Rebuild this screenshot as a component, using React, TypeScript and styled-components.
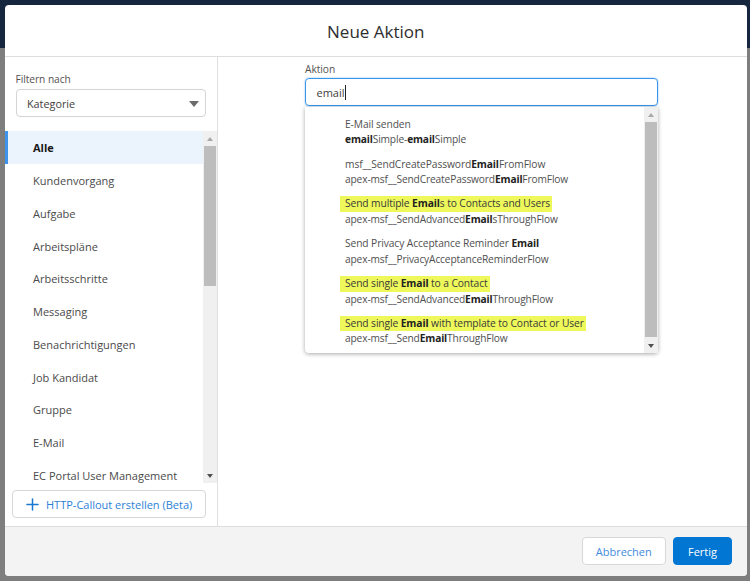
import React from 'react'
import styled, { createGlobalStyle } from 'styled-components'
import { Plus } from 'lucide-react'

const bodyFont = '"Open Sans", "Noto Sans", sans-serif'

const Global = createGlobalStyle`
  html, body { margin: 0; padding: 0; }
  body { font-family: ${bodyFont}; color: #3e3e3c; }
`

const Backdrop = styled.div`
  box-sizing: border-box;
  width: 750px;
  height: 581px;
  padding: 5px 3.5px 5px 5px;
  overflow: hidden;
  background: linear-gradient(#17263f 0, #17263f 48px, #7e7e7e 48px);
`

const Modal = styled.div`
  display: flex;
  flex-direction: column;
  height: 100%;
  background: #fff;
  border-radius: 4px;
  overflow: hidden;
`

const Header = styled.header`
  flex: 0 0 49px;
  padding-top: 2px;
  display: flex;
  align-items: center;
  justify-content: center;
  border-bottom: 1px solid #dedede;
  font-size: 17px;
  color: #2e2e2e;
`

const Body = styled.div`
  flex: 1;
  display: flex;
  min-height: 0;
`

const Sidebar = styled.aside`
  flex: 0 0 211.5px;
  display: flex;
  flex-direction: column;
  border-right: 1.5px solid #dfdfdf;
`

const FilterBox = styled.div`
  padding: 15px 11px 14px 10.5px;
`

const Label = styled.div`
  font-size: 10.2px;
  line-height: 14px;
  letter-spacing: -0.05px;
  color: #54514f;
`

const Select = styled.div`
  box-sizing: border-box;
  height: 28px;
  margin-top: 3px;
  padding: 0 6px 0 10.5px;
  display: flex;
  align-items: center;
  justify-content: space-between;
  border: 1px solid #d4d4d4;
  border-radius: 4px;
  font-size: 10.8px;
`

const Caret = styled.span`
  width: 0;
  height: 0;
  margin-top: 2px;
  border-left: 5px solid transparent;
  border-right: 5px solid transparent;
  border-top: 6px solid #6b6b6b;
`

const ListWrap = styled.div`
  flex: 1;
  min-height: 0;
  display: flex;
  overflow: hidden;
`

const List = styled.ul`
  flex: 1;
  margin: 0;
  padding: 0;
  list-style: none;
  overflow: hidden;
`

const ListItem = styled.li<{ $active?: boolean }>`
  box-sizing: border-box;
  height: 32.75px;
  padding-left: ${p => (p.$active ? '25px' : '28px')};
  padding-top: 1px;
  display: flex;
  align-items: center;
  font-size: 11px;
  font-weight: ${p => (p.$active ? 700 : 400)};
  color: ${p => (p.$active ? '#181818' : '#4a4a4a')};
  background: ${p => (p.$active ? '#ebf3fd' : 'transparent')};
  border-left: ${p => (p.$active ? '3px solid #3d94ea' : 'none')};
`

const Track = styled.div`
  flex: 0 0 14px;
  display: flex;
  flex-direction: column;
  background: #f0f0f0;
`

const ArrowBox = styled.div`
  flex: 0 0 15px;
  display: flex;
  align-items: center;
  justify-content: center;
  background: #f0f0f0;
`

const ArrowUp = styled.span`
  width: 0;
  height: 0;
  border-left: 3.5px solid transparent;
  border-right: 3.5px solid transparent;
  border-bottom: 4px solid #a8a8a8;
`

const ArrowDown = styled.span`
  width: 0;
  height: 0;
  border-left: 3.5px solid transparent;
  border-right: 3.5px solid transparent;
  border-top: 4px solid #505050;
`

const Thumb = styled.div<{ $height: number }>`
  flex: 0 0 ${p => p.$height}px;
  margin: 0 1px;
  background: #bdbdbd;
`

const TrackFill = styled.div`
  flex: 1;
`

const CalloutBar = styled.div`
  padding: 7px 11px 8px 7px;
`

const CalloutButton = styled.button`
  box-sizing: border-box;
  width: 194px;
  height: 28px;
  padding: 0 0 0 10px;
  display: flex;
  align-items: center;
  gap: 4px;
  background: #fff;
  border: 1px solid #d8d8d8;
  border-radius: 4px;
  font-family: inherit;
  font-size: 11px;
  color: #2c7fd6;
`

const Main = styled.main`
  flex: 1;
  padding: 5px 0 0 87px;
`

const Field = styled.div`
  position: relative;
  width: 353px;
`

const SearchInput = styled.div`
  box-sizing: border-box;
  height: 28px;
  margin-top: 2px;
  padding-left: 10.5px;
  display: flex;
  align-items: center;
  border: 1px solid #3a95ea;
  box-shadow: 0 0 2px #7cb9f2;
  border-radius: 4px;
  font-size: 11px;
  color: #3e3e3c;
`

const Cursor = styled.span`
  width: 1px;
  height: 15px;
  background: #222;
`

const Dropdown = styled.div`
  position: absolute;
  top: 45px;
  left: 0;
  right: 0;
  height: 246px;
  display: flex;
  background: #fff;
  border-radius: 0 0 4px 4px;
  box-shadow: 0 1px 4px rgba(0, 0, 0, 0.35);
`

const Options = styled.div`
  flex: 1;
  padding: 9.8px 0 0 40px;
`

const Option = styled.div`
  height: 39.8px;
  font-size: 10.2px;
  line-height: 15.6px;
  letter-spacing: -0.14px;
  color: #4f4f4f;

  b {
    color: #222;
    font-weight: 700;
  }
`

const OptionTitle = styled.div`
  font-size: 10.25px;
  letter-spacing: -0.1px;
  white-space: nowrap;
`

const Mark = styled.span`
  display: inline-block;
  margin-left: -5px;
  padding: 0 2px 0 5px;
  background: #eef85a;
  color: #3a3a3a;
`

const Footer = styled.footer`
  flex: 0 0 48px;
  display: flex;
  align-items: center;
  justify-content: flex-end;
  gap: 7px;
  padding: 0 14.5px 1px 0;
  background: #f3f3f3;
  border-top: 1px solid #dedede;
`

const Button = styled.button<{ $primary?: boolean }>`
  box-sizing: border-box;
  height: 28px;
  width: ${p => (p.$primary ? '59px' : '84.5px')};
  padding: 0;
  border-radius: 4px;
  border: 1px solid ${p => (p.$primary ? '#0176d3' : '#d8d8d8')};
  background: ${p => (p.$primary ? '#0176d3' : '#fff')};
  color: ${p => (p.$primary ? '#fff' : '#3f8bdb')};
  font-family: inherit;
  font-size: 11px;
`

const categories = [
  'Alle',
  'Kundenvorgang',
  'Aufgabe',
  'Arbeitspläne',
  'Arbeitsschritte',
  'Messaging',
  'Benachrichtigungen',
  'Job Kandidat',
  'Gruppe',
  'E-Mail',
  'EC Portal User Management',
]

const Scrollbar = ({ thumb }: { thumb: number }) => (
  <Track>
    <ArrowBox><ArrowUp /></ArrowBox>
    <Thumb $height={thumb} />
    <TrackFill />
    <ArrowBox><ArrowDown /></ArrowBox>
  </Track>
)

export default function App() {
  return (
    <>
      <Global />
      <Backdrop>
        <Modal>
          <Header>Neue Aktion</Header>
          <Body>
            <Sidebar>
              <FilterBox>
                <Label>Filtern nach</Label>
                <Select>Kategorie<Caret /></Select>
              </FilterBox>
              <ListWrap>
                <List>
                  {categories.map((c, i) => (
                    <ListItem key={c} $active={i === 0}>{c}</ListItem>
                  ))}
                </List>
                <Scrollbar thumb={140} />
              </ListWrap>
              <CalloutBar>
                <CalloutButton><Plus size={19} color="#1b78d0" strokeWidth={1.9} />HTTP-Callout erstellen (Beta)</CalloutButton>
              </CalloutBar>
            </Sidebar>
            <Main>
              <Field>
                <Label>Aktion</Label>
                <SearchInput>email<Cursor /></SearchInput>
                <Dropdown>
                  <Options>
                    <Option>
                      <OptionTitle>E-Mail senden</OptionTitle>
                      <div><b>email</b>Simple-<b>email</b>Simple</div>
                    </Option>
                    <Option>
                      <OptionTitle>msf__SendCreatePassword<b>Email</b>FromFlow</OptionTitle>
                      <div>apex-msf__SendCreatePassword<b>Email</b>FromFlow</div>
                    </Option>
                    <Option>
                      <OptionTitle><Mark>Send multiple <b>Email</b>s to Contacts and Users</Mark></OptionTitle>
                      <div>apex-msf__SendAdvanced<b>Email</b>sThroughFlow</div>
                    </Option>
                    <Option>
                      <OptionTitle>Send Privacy Acceptance Reminder <b>Email</b></OptionTitle>
                      <div>apex-msf__PrivacyAcceptanceReminderFlow</div>
                    </Option>
                    <Option>
                      <OptionTitle><Mark>Send single <b>Email</b> to a Contact</Mark></OptionTitle>
                      <div>apex-msf__SendAdvanced<b>Email</b>ThroughFlow</div>
                    </Option>
                    <Option>
                      <OptionTitle><Mark>Send single <b>Email</b> with template to Contact or User</Mark></OptionTitle>
                      <div>apex-msf__Send<b>Email</b>ThroughFlow</div>
                    </Option>
                  </Options>
                  <Scrollbar thumb={215} />
                </Dropdown>
              </Field>
            </Main>
          </Body>
          <Footer>
            <Button>Abbrechen</Button>
            <Button $primary>Fertig</Button>
          </Footer>
        </Modal>
      </Backdrop>
    </>
  )
}
